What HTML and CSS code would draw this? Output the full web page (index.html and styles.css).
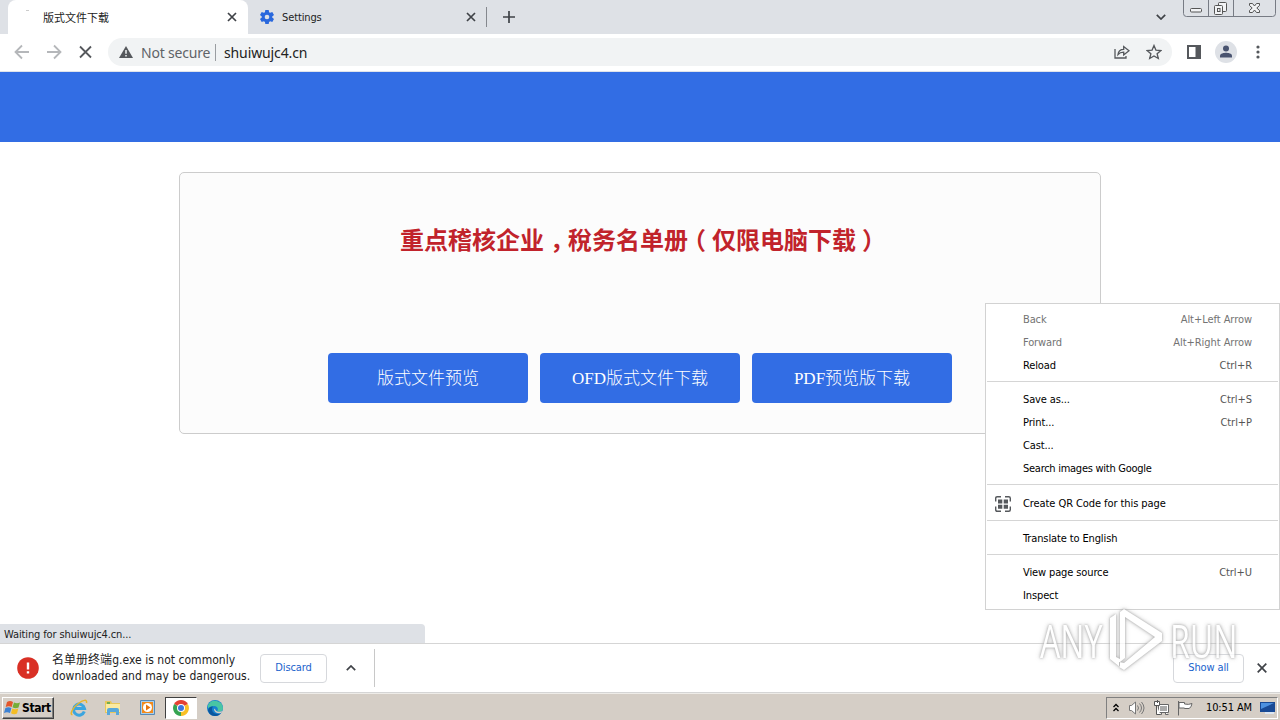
FILE: index.html
```html
<!DOCTYPE html>
<html lang="zh-CN">
<head>
    <meta charset="utf-8">
    <title>版式文件下载</title>
    <link rel="stylesheet" href="styles.css">
</head>
<body>
<div class="tabs">
    <div class="tab-edge"></div>
    <div class="tab active">
        <span class="spinner"></span>
        <span class="tab-title">版式文件下载</span>
        <svg class="tab-close" width="10" height="10" viewBox="0 0 10 10"><path d="M1 1l8 8M9 1l-8 8"/></svg>
    </div>
    <div class="tab">
        <svg class="gear" width="14" height="14" viewBox="0 0 14 14"><g fill="#2a68dd"><circle cx="7" cy="7" r="5.2"/><path d="M5.3 0h3.4l.5 3H4.8zM5.3 14h3.4l.5-3H4.8zM0 4.9L1.7 2l2.8 1.1L2.3 7zM14 9.1L12.3 12l-2.8-1.1L11.7 7zM0 9.1L1.7 12l2.8-1.1L2.3 7zM14 4.9L12.3 2 9.5 3.1 11.7 7z"/></g><circle cx="7" cy="7" r="2.3" fill="#dee1e6"/></svg>
        <span class="tab-title">Settings</span>
        <svg class="tab-close" width="10" height="10" viewBox="0 0 10 10"><path d="M1 1l8 8M9 1l-8 8"/></svg>
    </div>
    <div class="tab-line"></div>
    <svg class="plus" width="12" height="12" viewBox="0 0 12 12"><path d="M6 0v12M0 6h12"/></svg>
    <svg class="tab-search" width="10" height="6" viewBox="0 0 10 6"><path d="M.8.8L5 5 9.2.8"/></svg>
    <svg class="window-buttons" width="94" height="17" viewBox="0 0 94 17">
        <path class="frame" d="M.5 0v13.500q0 3 3 3h86q3 0 3-3V0M25.500 0v16.500M50.500 0v16.500"/>
        <g class="sign"><rect x="7.500" y="8.500" width="11" height="3.500" rx="1"/><rect x="35.500" y="2.500" width="8" height="9" rx="1"/><rect x="31.500" y="5.500" width="8" height="9" rx="1"/><rect x="34.500" y="8.500" width="2.500" height="3"/><path d="M66.500 3.500h3l2 2.500 2-2.500h3v2L73.800 8l2.700 2.500v2h-3l-2-2.500-2 2.500h-3v-2L69.200 8l-2.700-2.500z"/></g>
    </svg>
</div>
<div class="toolbar">
    <svg class="nav" width="96" height="16" viewBox="0 0 96 16">
        <path stroke="#b5b7ba" d="M15 8H1.500M8 1.500L1.500 8 8 14.500M33 8h13.500M40 1.500L46.500 8 40 14.500"/>
        <path stroke="#55585c" d="M66 2.500l11 11M77 2.500l-11 11"/>
    </svg>
    <div class="address">
        <svg width="14" height="12" viewBox="0 0 14 12"><path fill="#55585c" d="M7 0l7 12H0z"/><path stroke="#f1f3f4" stroke-width="1.5" d="M7 4v3.800M7 9v1.500"/></svg>
        <span class="insecure">Not secure</span>
        <span class="url">shuiwujc4.cn</span>
        <svg class="share" width="16" height="14" viewBox="0 0 16 14"><path d="M1 4v9h11v-2M4 9.500c.4-3.600 2.200-5.200 5.700-5.200V1.500L15 5.800 9.700 10V7.200C7 7.200 5.400 7.800 4 9.500z"/></svg>
        <svg class="star" width="16" height="16" viewBox="0 0 16 16"><path d="M8 1.500l1.900 4.600 5 .4-3.800 3.200 1.200 4.800L8 11.900l-4.300 2.600 1.200-4.800L1.100 6.500l5-.4z"/></svg>
    </div>
    <svg class="panel" width="14" height="14" viewBox="0 0 14 14"><path fill="#55585c" d="M0 0h14v14H0zM2 2v10h6.500V2z" fill-rule="evenodd"/></svg>
    <svg class="profile" width="22" height="22" viewBox="0 0 22 22"><circle cx="11" cy="11" r="11" fill="#dee1e6"/><circle cx="11" cy="7.500" r="3" fill="#4a5470"/><path fill="#4a5470" d="M5 16.500v-1.700C5 12.500 9 11.800 11 11.800s6 .7 6 3v1.700z"/></svg>
    <svg class="dots" width="4" height="14" viewBox="0 0 4 14"><g fill="#55585c"><circle cx="2" cy="2" r="1.600"/><circle cx="2" cy="7" r="1.600"/><circle cx="2" cy="12" r="1.600"/></g></svg>
</div>
<div class="page">
    <div class="header"></div>
    <div class="card">
        <h1>重点稽核企业<span class="punct">，</span>稅务名单册<span class="punct">（</span>仅限电脑下载<span class="punct">）</span></h1>
        <div class="buttons">
            <a class="btn">版式文件预览</a>
            <a class="btn">OFD版式文件下载</a>
            <a class="btn">PDF预览版下载</a>
        </div>
    </div>
    <div class="status">Waiting for shuiwujc4.cn...</div>
</div>
<div class="downloads">
    <svg class="danger" width="22" height="22" viewBox="0 0 22 22"><circle cx="11" cy="11" r="10.800" fill="#d93025"/><path stroke="#fff" stroke-width="2.400" d="M11 5.500v7M11 14.200v2.400"/></svg>
    <div class="warning">名单册终端g.exe is not commonly<br>downloaded and may be dangerous.</div>
    <div class="chip discard">Discard</div>
    <svg class="up" width="10" height="6" viewBox="0 0 10 6"><path d="M.8 5.200L5 1l4.200 4.200"/></svg>
    <div class="split"></div>
    <div class="chip show-all">Show all</div>
    <svg class="bar-close" width="10" height="10" viewBox="0 0 10 10"><path d="M.7.7l8.600 8.600M9.300.7L.7 9.300"/></svg>
</div>
<div class="taskbar">
    <div class="start">
        <svg width="17" height="16" viewBox="0 0 17 16"><path fill="#e3562b" d="M3 2q3-2 6 0L7.700 7q-3-1.500-6 0z"/><path fill="#75ad36" d="M10 2.500q3 1.500 6 0l-1.500 5q-3 1.500-6-.2z"/><path fill="#3c82d4" d="M1.400 8q3-1.600 6 0L6 13q-3-1.700-6 0z"/><path fill="#f4bd25" d="M8.300 8.400q3 1.600 6 0L13 13.500q-3 1.500-6-.3z"/></svg>
        <span>Start</span>
    </div>
    <div class="task"><svg width="18" height="18" viewBox="0 0 18 18"><path fill="none" stroke="#3ba5df" stroke-width="3" d="M14.300 12.500A5.500 5.500 0 1 1 14.500 9.500H4.500"/><path fill="none" stroke="#e8b52b" stroke-width="1.500" d="M2.500 15.500C-1 16 3 8 9 4c4-3 8.500-4 7.500 0"/></svg></div>
    <div class="task"><svg width="18" height="18" viewBox="0 0 18 18"><path fill="#e8c75c" d="M1 2h6l1 2h8v10H1z"/><path fill="#fbeaa1" d="M2 5h14v8H2z"/><path fill="#58a8da" d="M3 16v-5q0-2 2-2h8q2 0 2 2v5h-3v-3H6v3z"/><path fill="#73ad50" d="M3 3h3v2H3z"/></svg></div>
    <div class="task"><svg width="18" height="18" viewBox="0 0 18 18"><path fill="#a9cfec" stroke="#5789b5" d="M2.500 1.500h14v14h-14z"/><path fill="#f28a1c" d="M4 3h11v11H4z"/><circle cx="9.500" cy="8.500" r="4.500" fill="#fff"/><path fill="#e8750e" d="M8 5.500l4.500 3L8 11.500z"/></svg></div>
    <div class="task pressed"><svg width="16" height="16" viewBox="0 0 16 16"><path fill="#e44133" d="M8 8L1.100 4A8 8 0 0 1 14.900 4z"/><path fill="#35a452" d="M8 8v8A8 8 0 0 1 1.100 4z"/><path fill="#f9c026" d="M8 8l6.900-4A8 8 0 0 1 8 16z"/><circle cx="8" cy="8" r="4" fill="#fff"/><circle cx="8" cy="8" r="3" fill="#3c76df"/></svg></div>
    <div class="task"><svg width="16" height="16" viewBox="0 0 16 16"><circle cx="8" cy="8" r="8" fill="#1782cf"/><path fill="#49c5a4" d="M1 5a8 8 0 0 1 15 3c0 3-3 4.500-6 3.300 2-2 .5-5.300-3-5.300-2.500 0-4.500 1-6 2.500z"/><path fill="#0b579f" d="M5 9c0 4 4 6 9 4.300C10 18 2 16.500 1 10c1-3 3-4 5-3.500Q5 7.500 5 9z"/><path fill="#d5cec6" d="M8 8.500c0 3 3 4 8 2.500l-2 2C10 14 7.500 12 7 9.500z"/></svg></div>
    <div class="tray">
        <svg class="chevrons" width="6" height="9" viewBox="0 0 6 9"><path d="M.5 4L3 1.500 5.500 4M.5 8L3 5.500 5.500 8"/></svg>
        <svg class="speaker" width="18" height="16" viewBox="0 0 18 16"><path fill="#fff" stroke="#777" d="M1.500 5.500h2L7.500 2v12l-4-3.500h-2z"/><path fill="none" stroke="#777" d="M9.500 5.500q2 2.500 0 5M11.500 3.500q4 4.500 0 9M13.500 2q5 6 0 12"/></svg>
        <svg class="network" width="17" height="16" viewBox="0 0 17 16"><path fill="#fff" stroke="#666" d="M5.500 4.500h10v8h-10zM8.500 12.500v2h-2M12.500 12.500v2h3"/><path fill="#aaa" d="M7 6h7v5H7z"/><path fill="#fff" stroke="#555" d="M1.500 1.500h5v4h-5zM3.500 5.500v9h4M4.500 0v3"/></svg>
        <svg class="flag" width="17" height="16" viewBox="0 0 17 16"><path fill="#fff" stroke="#666" d="M1.500 1v14.500M2 2.500h5.500v1.500q4 1 7.500-.5-.5 4-3 5H7.500V8H2z"/></svg>
        <span class="clock">10:51 AM</span>
        <svg width="16" height="14" viewBox="0 0 16 14"><path fill="#194a95" d="M0 1h15v10H0z"/><path fill="#4d91df" d="M1 2h13L1 8z"/><path fill="#dce6f2" d="M5 11h9v2H5z"/></svg>
    </div>
</div>
<div class="menu">
    <div class="item off"><span>Back</span><kbd>Alt+Left Arrow</kbd></div>
    <div class="item off"><span>Forward</span><kbd>Alt+Right Arrow</kbd></div>
    <div class="item"><span>Reload</span><kbd>Ctrl+R</kbd></div>
    <hr>
    <div class="item"><span>Save as...</span><kbd>Ctrl+S</kbd></div>
    <div class="item"><span>Print...</span><kbd>Ctrl+P</kbd></div>
    <div class="item"><span>Cast...</span></div>
    <div class="item"><span class="search">Search images with Google</span></div>
    <hr>
    <div class="item tall">
        <svg class="qr" width="16" height="16" viewBox="0 0 16 16"><path fill="none" stroke="#55585c" stroke-width="1.400" d="M.7 5.500V2.200Q.7.700 2.200.700H6M10 .700h3.800q1.500 0 1.500 1.500v3.300M15.300 10.500v3.300q0 1.500-1.500 1.500H10M6 15.300H2.200q-1.500 0-1.500-1.500v-3.300"/><path fill="#55585c" d="M3 3.500h4.300v4H3zM8.700 3.500H13v4H8.700zM3 8.700h4.300v4H3zM8.700 8.700H13v4H8.700z"/></svg>
        <span>Create QR Code for this page</span>
    </div>
    <hr>
    <div class="item"><span>Translate to English</span></div>
    <hr>
    <div class="item"><span>View page source</span><kbd>Ctrl+U</kbd></div>
    <div class="item"><span>Inspect</span></div>
</div>
<div class="watermark">
    <span>ANY</span>
    <svg width="56" height="62" viewBox="0 0 56 62"><path d="M2 50V9l6-4v43l4 2V3l4-3 38 24v8L16 61l-5-3V53l5 1 31-26L17 8v41l-5 4v5z"/></svg>
    <span>RUN</span>
</div>
</body>
</html>
```
FILE: styles.css
```css
* {
  box-sizing: border-box;
}
body {
  margin: 0;
  width: 1280px;
  height: 720px;
  overflow: hidden;
  position: relative;
  display: flex;
  flex-direction: column;
  background: #fff;
  color: #222;
  font: 11px "DejaVu Sans Condensed", "DejaVu Sans", "Noto Sans CJK SC", sans-serif;
  font-stretch: condensed;
  letter-spacing: -0.12px;
  white-space: nowrap;
}
svg {
  display: block;
  flex: none;
}
.tabs {
  height: 34px;
  display: flex;
  align-items: center;
  background: #dee1e6;
  flex: none;
}
.tab-edge {
  width: 8px;
  height: 34px;
}
.tab {
  height: 34px;
  width: 238px;
  display: flex;
  align-items: center;
  padding: 0 10px 0 12px;
}
.tab.active {
  width: 240px;
  background: #fff;
  border-radius: 8px 8px 0 0;
  padding: 0 11px 0 16px;
}
.spinner {
  width: 3px;
  height: 1px;
  margin: -13px 14px 0 2px;
  background: #ccc;
}
.active .tab-title {
  letter-spacing: 0;
}
.gear {
  margin-right: 8px;
}
.tab-close {
  margin-left: auto;
}
.tab-close path, .plus path, .tab-search path, .up path, .bar-close path {
  fill: none;
  stroke: #3f4247;
  stroke-width: 1.7;
}
.tab-line {
  width: 1px;
  height: 20px;
  background: #85888e;
}
.plus {
  margin-left: 16px;
}
.tab-search {
  margin-left: auto;
  margin-right: 17px;
}
.window-buttons {
  align-self: flex-start;
  margin-right: 3px;
}
.window-buttons path, .window-buttons rect {
  fill: none;
  stroke: #777b84;
}
.window-buttons .sign * {
  fill: #f2f3f5;
  stroke: #555;
}
.toolbar {
  height: 38px;
  flex: none;
  display: flex;
  align-items: center;
  padding: 0 20px 1px 14px;
  border-bottom: 1px solid #dfe3ea;
}
.nav {
  margin-right: -2px;
}
.nav path {
  fill: none;
  stroke-width: 1.8;
}
.address {
  width: 1064px;
  height: 28px;
  border-radius: 14px;
  background: #f1f3f4;
  display: flex;
  align-items: center;
  padding: 0 10px 0 11px;
  font: 14px "Noto Sans", sans-serif;
}
.insecure {
  width: 75px;
  color: #5f6368;
  margin-left: 8px;
  border-right: 1px solid #9a9da1;
  line-height: 17px;
  letter-spacing: -0.2px;
}
.url {
  margin-left: 8px;
}
.share {
  margin-left: auto;
  margin-right: 16px;
}
.share path, .star path {
  fill: none;
  stroke: #55585c;
  stroke-width: 1.3;
}
.panel {
  margin-left: 15px;
}
.profile {
  margin-left: 14px;
}
.dots {
  margin-left: auto;
}
.page {
  height: 571px;
  flex: none;
  display: flex;
  flex-direction: column;
}
.header {
  height: 70px;
  background: #326de4;
}
.card {
  width: 922px;
  height: 262px;
  margin: 30px auto 0 179px;
  border: 1px solid #ccc;
  border-radius: 5px;
  background: #fcfcfc;
  display: flex;
  flex-direction: column;
  align-items: center;
}
h1 {
  margin: 48px 0 0;
  font: bold 24px/36px "Noto Sans CJK SC", sans-serif;
  letter-spacing: 0;
  color: #c1232b;
}
/* half-width glyph centred in a full-width cell */
.punct {
  font-feature-settings: "halt";
  padding: 0 6px;
}
.buttons {
  display: flex;
  gap: 12px;
  margin-top: 96px;
}
.btn {
  width: 200px;
  height: 50px;
  border-radius: 4px;
  background: #326de4;
  color: #fff;
  text-align: center;
  font: 300 17px/52px "Liberation Serif", "Noto Sans CJK SC", serif;
  letter-spacing: 0;
}
.status {
  width: 425px;
  height: 19px;
  margin-top: auto;
  padding-left: 4px;
  line-height: 21px;
  background: #dee1e6;
  border-top-right-radius: 4px;
}
.downloads {
  height: 50px;
  flex: none;
  display: flex;
  align-items: center;
  border-top: 1px solid #d5d5d5;
  border-bottom: 1px solid #d5d5d5;
  padding: 0 13px 0 17px;
}
.warning {
  width: 208px;
  margin-left: 13px;
  font-size: 12px;
  line-height: 16px;
  letter-spacing: 0.03px;
}
.chip {
  height: 29px;
  border: 1px solid #d6d8dc;
  border-radius: 4px;
  line-height: 26px;
  text-align: center;
  color: #1a62cc;
}
.discard {
  width: 67px;
}
.up {
  margin-left: 19px;
}
.split {
  width: 1px;
  height: 38px;
  margin-left: 18px;
  background: #c8c8c8;
}
.show-all {
  width: 71px;
  margin-left: auto;
  margin-right: 13px;
}
.taskbar {
  height: 27px;
  flex: none;
  display: flex;
  align-items: center;
  padding: 1px 0 0 2px;
  background: #d5cec6;
  border-top: 1px solid #eeece8;
  color: #000;
}
.start {
  width: 52px;
  height: 22px;
  margin-right: 9px;
  display: flex;
  align-items: center;
  gap: 1px;
  padding-left: 1px;
  border: 1px solid #fff;
  border-right-color: #404040;
  border-bottom-color: #404040;
  box-shadow: inset -1px -1px #808080;
  font-weight: bold;
  font-size: 12px;
  letter-spacing: -0.4px;
}
.task {
  width: 32px;
  height: 22px;
  margin-right: 2px;
  display: flex;
  align-items: center;
  justify-content: center;
}
.pressed {
  background: #fff;
  border: 1px solid #404040;
  border-right-color: #fff;
  border-bottom-color: #fff;
}
.tray {
  width: 172px;
  height: 22px;
  margin-left: auto;
  margin-right: 2px;
  display: flex;
  align-items: center;
  padding-left: 6px;
  border: 1px solid #808080;
  border-right-color: #fff;
  border-bottom-color: #fff;
}
.chevrons path {
  fill: none;
  stroke: #000;
  stroke-width: 1.3;
}
.speaker {
  margin-left: 9px;
}
.network {
  margin-left: 7px;
}
.flag {
  margin-left: 7px;
}
.clock {
  width: 47px;
  margin-left: 12px;
  margin-right: 7px;
}
.menu {
  position: absolute;
  left: 985px;
  top: 303px;
  width: 295px;
  height: 307px;
  padding-top: 4px;
  background: #fff;
  border: 1px solid #d2d2d2;
  color: #000;
}
.item {
  height: 23px;
  display: flex;
  align-items: center;
  padding: 0 27px 0 37px;
}
.item kbd {
  margin-left: auto;
  font-family: inherit;
  letter-spacing: -0.05px;
  color: #555;
}
.off, .off kbd {
  color: #737373;
}
.search {
  letter-spacing: -0.27px;
}
.tall {
  height: 25px;
  padding-left: 9px;
  letter-spacing: -0.08px;
}
.qr {
  margin-right: 12px;
}
hr {
  margin: 4px 1px 6px;
  border: 0;
  border-top: 1px solid #d5d5d5;
}
.watermark {
  position: absolute;
  left: 1040px;
  top: 609px;
  display: flex;
  align-items: center;
  gap: 6px;
  font: 46px/46px "Open Sans", sans-serif;
  letter-spacing: 0;
  color: #fff;
  filter: drop-shadow(0 0 1px #999) drop-shadow(0 0 2px #bbb);
  opacity: 0.8;
}
.watermark span {
  width: 62px;
  transform: scaleX(0.7);
  transform-origin: left;
}
.watermark path {
  fill: #fff;
  fill-rule: evenodd;
}
```
